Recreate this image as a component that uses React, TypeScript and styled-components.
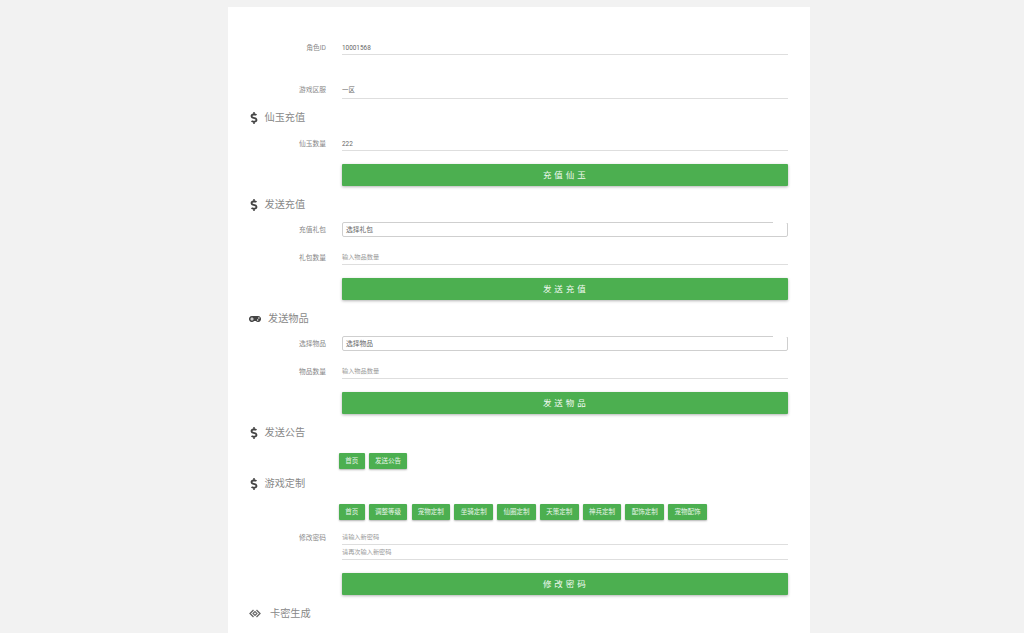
import React from "react";
import styled, { createGlobalStyle } from "styled-components";
import { FaDollarSign, FaGamepad } from "react-icons/fa";

const Global = createGlobalStyle`
  html, body { margin: 0; padding: 0; background: #f2f2f2; height: 633px; overflow: hidden; }
  body { font-family: Roboto, "Noto Sans CJK SC", sans-serif; }
`;

const Page = styled.div`
  height: 633px;
  overflow: hidden;
  padding-top: 7px;
  box-sizing: border-box;
`;

const Card = styled.main`
  width: 581.5px;
  margin-left: 228px;
  height: 640px;
  background: #fff;
  box-sizing: border-box;
  padding: 33px 21.5px 0 21px;
`;

const Heading = styled.h3<{ $top: number; $gap?: number }>`
  display: flex;
  align-items: center;
  box-sizing: border-box;
  height: 14px;
  padding-top: 1px;
  margin: ${(p) => p.$top}px 0 0;
  font-size: 10.2px;
  line-height: 13px;
  font-weight: 400;
  color: #888;
  gap: ${(p) => p.$gap ?? 5}px;
  svg { color: #444; flex: none; }
`;

const Row = styled.div<{ $top: number; $height: number }>`
  display: grid;
  grid-template-columns: 77px 1fr;
  column-gap: 16px;
  margin-top: ${(p) => p.$top}px;
  height: ${(p) => p.$height}px;
  align-items: center;
`;

const Label = styled.label<{ $offset?: number }>`
  font-size: 6.75px;
  color: #888;
  text-align: right;
  line-height: 10px;
  margin-top: ${(p) => p.$offset ?? 1}px;
`;

const Field = styled.div<{ $placeholder?: boolean; $stacked?: boolean }>`
  height: ${(p) => (p.$stacked ? "15px" : "100%")};
  border-bottom: 1px solid #dedede;
  box-sizing: border-box;
  font-size: ${(p) => (p.$placeholder ? "6.2px" : "6.4px")};
  display: flex;
  align-items: center;
  color: ${(p) => (p.$placeholder ? "#999" : "#666")};
  padding-top: ${(p) => (p.$placeholder ? "0" : "2px")};
  padding-bottom: ${(p) => (p.$placeholder && !p.$stacked ? "1.5px" : "0")};
`;

const SelectBox = styled.div`
  position: relative;
  height: 15px;
  box-sizing: border-box;
  border: 1px solid #cfcfcf;
  border-radius: 2px;
  padding-left: 3px;
  font-size: 6.75px;
  line-height: 15px;
  color: #666;
`;

const Notch = styled.span`
  position: absolute;
  right: -1px;
  top: -1px;
  width: 15px;
  height: 1px;
  background: #fff;
`;

const Stack = styled.div`
  display: flex;
  flex-direction: column;
`;

const TopRow = styled(Row)`
  align-items: start;
`;

const SubmitRow = styled.div<{ $top: number }>`
  margin: ${(p) => p.$top}px 0 0 93px;
`;

const Submit = styled.button`
  display: block;
  width: 100%;
  height: 21.5px;
  padding: 0 0 2px 1.5px;
  border: 0;
  border-radius: 1px;
  background: #4caf50;
  color: #f2faf2;
  font-family: inherit;
  font-size: 8.5px;
  letter-spacing: 2.9px;
  box-shadow: 0 1px 3px rgba(0, 0, 0, 0.3);
`;

const ChipBar = styled.div<{ $top: number }>`
  display: flex;
  gap: 4.2px;
  margin: ${(p) => p.$top}px 0 0 90px;
`;

const Chip = styled.button`
  height: 16px;
  padding: 0 6.3px;
  border: 0;
  border-radius: 1px;
  background: #4caf50;
  color: #e8f5e9;
  font-family: inherit;
  font-size: 6.5px;
  line-height: 16px;
  white-space: nowrap;
  box-shadow: 0 1px 2px rgba(0, 0, 0, 0.3);
`;

const DollarIcon = styled(FaDollarSign)`
  margin: 0 0 0 -1.5px;
`;

const Dollar = () => <DollarIcon size={12} />;

const LinkIcon = () => (
  <svg width="12" height="9" viewBox="0 0 24 18" fill="none" stroke="#666" strokeWidth="2.6">
    <path d="M9 2 2 9l7 7M15 2l7 7-7 7" />
    <path d="M8 9l4-4 4 4-4 4z" strokeWidth="2.2" />
  </svg>
);

const customs = ["首页", "调整等级", "宠物定制", "坐骑定制", "仙圈定制", "天策定制", "神兵定制", "配饰定制", "宠物配饰"];

export default function App() {
  return (
    <Page>
      <Global />
      <Card>
        <Row $top={0} $height={15}>
          <Label>角色ID</Label>
          <Field>10001568</Field>
        </Row>
        <Row $top={24} $height={20}>
          <Label>游戏区服</Label>
          <Field>一区</Field>
        </Row>
        <Heading $top={11}><Dollar />仙玉充值</Heading>
        <Row $top={12} $height={15}>
          <Label>仙玉数量</Label>
          <Field>222</Field>
        </Row>
        <SubmitRow $top={13}><Submit>充值仙玉</Submit></SubmitRow>
        <Heading $top={11.5}><Dollar />发送充值</Heading>
        <Row $top={11} $height={15}>
          <Label $offset={0}>充值礼包</Label>
          <SelectBox>选择礼包<Notch /></SelectBox>
        </Row>
        <Row $top={13} $height={15}>
          <Label $offset={0}>礼包数量</Label>
          <Field $placeholder>输入物品数量</Field>
        </Row>
        <SubmitRow $top={13}><Submit>发送充值</Submit></SubmitRow>
        <Heading $top={11.5} $gap={7}><FaGamepad size={12} />发送物品</Heading>
        <Row $top={11} $height={15}>
          <Label $offset={0}>选择物品</Label>
          <SelectBox>选择物品<Notch /></SelectBox>
        </Row>
        <Row $top={13} $height={15}>
          <Label $offset={0}>物品数量</Label>
          <Field $placeholder>输入物品数量</Field>
        </Row>
        <SubmitRow $top={13}><Submit>发送物品</Submit></SubmitRow>
        <Heading $top={11.5}><Dollar />发送公告</Heading>
        <ChipBar $top={14}>
          <Chip>首页</Chip>
          <Chip>发送公告</Chip>
        </ChipBar>
        <Heading $top={7}><Dollar />游戏定制</Heading>
        <ChipBar $top={14}>
          {customs.map((c, i) => <Chip key={i}>{c}</Chip>)}
        </ChipBar>
        <TopRow $top={9.5} $height={30}>
          <Label $offset={3}>修改密码</Label>
          <Stack>
            <Field $placeholder $stacked>请输入新密码</Field>
            <Field $placeholder $stacked>请再次输入新密码</Field>
          </Stack>
        </TopRow>
        <SubmitRow $top={13.5}><Submit>修改密码</Submit></SubmitRow>
        <Heading $top={11.5} $gap={9}><LinkIcon />卡密生成</Heading>
      </Card>
    </Page>
  );
}
